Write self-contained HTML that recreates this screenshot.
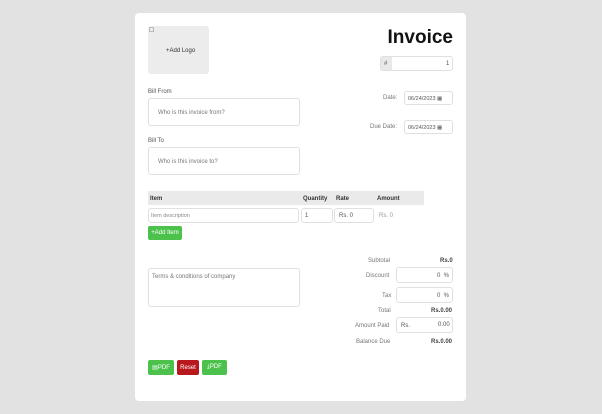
<!DOCTYPE html>
<html><head><style>
*{margin:0;padding:0;box-sizing:border-box}
body{width:602px;height:414px;background:#e2e2e2;font-family:"Liberation Sans",sans-serif;position:relative;overflow:hidden;color:#333}
.card{position:absolute;left:135px;top:13px;width:331px;height:388px;background:#fff;border-radius:4px}
.a{position:absolute}
.box{position:absolute;border:1px solid #e0e0e0;border-radius:3px;background:#fff}
.t{position:absolute;font-size:6px;color:#555;white-space:nowrap}
.btn{position:absolute;color:#fff;font-size:6px;display:flex;align-items:center;justify-content:center;border-radius:2px}
</style></head><body>
<div class="card"></div>
<div class="a" style="left:148px;top:26px;width:61px;height:48px;background:#ececec;border-radius:3px"></div>
<div class="t" style="left:149px;top:27px;width:5px;height:5px;border:1px solid #bbb"></div>
<div class="t" style="left:166px;top:48px;color:#333">+Add Logo</div>
<div class="a" style="left:380px;top:27px;width:73px;text-align:right;font-size:19px;font-weight:bold;color:#111">Invoice</div>
<div class="box" style="left:380px;top:56px;width:73px;height:15px"></div>
<div class="a" style="left:381px;top:57px;width:11px;height:13px;background:#e9e9e9"></div>
<div class="t" style="left:384px;top:61px">#</div>
<div class="t" style="left:446px;top:61px">1</div>
<div class="t" style="left:148px;top:89px">Bill From</div>
<div class="box" style="left:148px;top:98px;width:152px;height:28px"></div>
<div class="t" style="left:158px;top:110px;color:#777">Who is this invoice from?</div>
<div class="t" style="left:383px;top:95px;color:#777">Date:</div>
<div class="box" style="left:404px;top:91px;width:49px;height:14px"></div>
<div class="t" style="left:408px;top:96px;font-size:5.5px">06/24/2023 ▦</div>
<div class="t" style="left:370px;top:124px;color:#777">Due Date:</div>
<div class="box" style="left:404px;top:120px;width:49px;height:14px"></div>
<div class="t" style="left:408px;top:125px;font-size:5.5px">06/24/2023 ▦</div>
<div class="t" style="left:148px;top:138px">Bill To</div>
<div class="box" style="left:148px;top:147px;width:152px;height:28px"></div>
<div class="t" style="left:158px;top:159px;color:#777">Who is this invoice to?</div>
<div class="a" style="left:148px;top:191px;width:276px;height:14px;background:#eaeaea"></div>
<div class="t" style="left:150px;top:196px;font-weight:bold;color:#333">Item</div>
<div class="t" style="left:303px;top:196px;font-weight:bold;color:#333">Quantity</div>
<div class="t" style="left:336px;top:196px;font-weight:bold;color:#333">Rate</div>
<div class="t" style="left:377px;top:196px;font-weight:bold;color:#333">Amount</div>
<div class="box" style="left:148px;top:208px;width:151px;height:15px"></div>
<div class="t" style="left:151px;top:213px;color:#888;font-size:5.5px">Item description</div>
<div class="box" style="left:301px;top:208px;width:32px;height:15px"></div>
<div class="t" style="left:305px;top:213px">1</div>
<div class="box" style="left:334px;top:208px;width:40px;height:15px"></div>
<div class="t" style="left:339px;top:213px">Rs. 0</div>
<div class="t" style="left:379px;top:213px;color:#999">Rs. 0</div>
<div class="btn" style="left:148px;top:226px;width:34px;height:14px;background:#4cc24c">+Add Item</div>
<div class="t" style="left:368px;top:258px;color:#777">Subtotal</div>
<div class="t" style="left:440px;top:258px;font-weight:bold;color:#444">Rs.0</div>
<div class="box" style="left:148px;top:268px;width:152px;height:39px"></div>
<div class="t" style="left:152px;top:274px;color:#777">Terms &amp; conditions of company</div>
<div class="t" style="left:366px;top:273px;color:#777">Discount</div>
<div class="box" style="left:396px;top:267px;width:57px;height:16px"></div>
<div class="t" style="left:437px;top:273px">0 &nbsp;%</div>
<div class="t" style="left:382px;top:293px;color:#777">Tax</div>
<div class="box" style="left:396px;top:287px;width:57px;height:16px"></div>
<div class="t" style="left:437px;top:293px">0 &nbsp;%</div>
<div class="t" style="left:378px;top:308px;color:#777">Total</div>
<div class="t" style="left:431px;top:308px;font-weight:bold;color:#444">Rs.0.00</div>
<div class="t" style="left:355px;top:323px;color:#777">Amount Paid</div>
<div class="box" style="left:396px;top:317px;width:57px;height:16px"></div>
<div class="t" style="left:401px;top:323px">Rs.</div>
<div class="t" style="left:438px;top:322px">0.00</div>
<div class="t" style="left:356px;top:339px;color:#777">Balance Due</div>
<div class="t" style="left:431px;top:339px;font-weight:bold;color:#444">Rs.0.00</div>
<div class="btn" style="left:148px;top:360px;width:26px;height:15px;background:#4cc24c">▤PDF</div>
<div class="btn" style="left:177px;top:360px;width:22px;height:15px;background:#b8191c">Reset</div>
<div class="btn" style="left:202px;top:360px;width:25px;height:15px;background:#4cc24c">⤓PDF</div>
</body></html>
